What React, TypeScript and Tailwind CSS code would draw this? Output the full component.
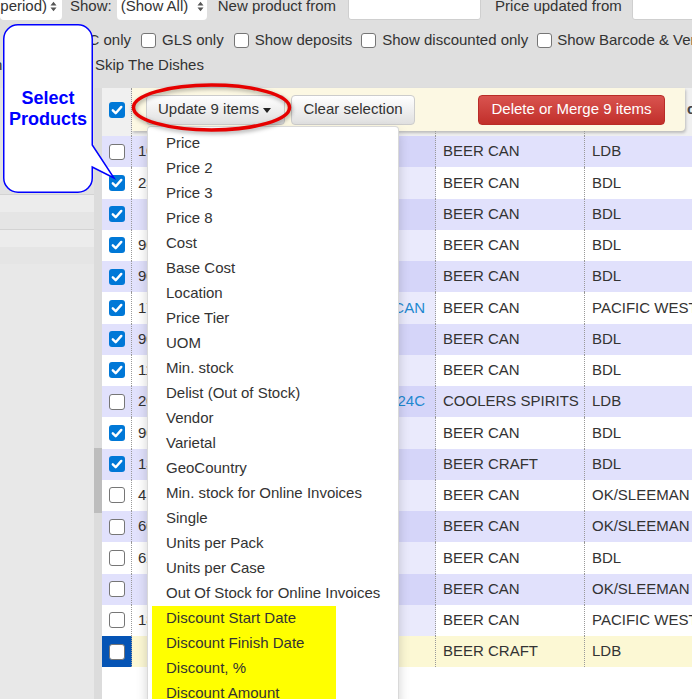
import React from 'react'

// ============================================================================
// Products grid with bulk-update dropdown (annotated screenshot)
// ============================================================================

type Row = {
  code: string
  name: string
  cat: string
  vendor: string
  checked?: boolean
  active?: boolean
  link?: boolean
}

const rows: Row[] = [
  { code: '10245', name: 'KOKANEE 6', cat: 'BEER CAN', vendor: 'LDB' },
  { code: '23011', name: 'BUD 8', cat: 'BEER CAN', vendor: 'BDL', checked: true },
  { code: '', name: 'CANADIAN 6', cat: 'BEER CAN', vendor: 'BDL', checked: true },
  { code: '90412', name: 'COORS 12', cat: 'BEER CAN', vendor: 'BDL', checked: true },
  { code: '90418', name: 'COORS 24', cat: 'BEER CAN', vendor: 'BDL', checked: true },
  { code: '17720', name: 'PACIFIC PILSNER 473ML 6 CAN', cat: 'BEER CAN', vendor: 'PACIFIC WEST', checked: true, link: true },
  { code: '90433', name: 'MOLSON 15', cat: 'BEER CAN', vendor: 'BDL', checked: true },
  { code: '11208', name: 'BLUE 12', cat: 'BEER CAN', vendor: 'BDL', checked: true },
  { code: '20981', name: 'SMIRNOFF ICE ORIGINAL 24C', cat: 'COOLERS SPIRITS', vendor: 'LDB', link: true },
  { code: '90457', name: 'STELLA 6', cat: 'BEER CAN', vendor: 'BDL', checked: true },
  { code: '13390', name: 'GOOSE IPA 6', cat: 'BEER CRAFT', vendor: 'BDL', checked: true },
  { code: '41022', name: 'SLEEMAN 8', cat: 'BEER CAN', vendor: 'OK/SLEEMAN' },
  { code: '60114', name: 'OKANAGAN 6', cat: 'BEER CAN', vendor: 'OK/SLEEMAN' },
  { code: '62008', name: 'BUSCH 12', cat: 'BEER CAN', vendor: 'BDL' },
  { code: '', name: 'CLEAR 6', cat: 'BEER CAN', vendor: 'OK/SLEEMAN' },
  { code: '18841', name: 'LUCKY 8', cat: 'BEER CAN', vendor: 'PACIFIC WEST' },
  { code: '', name: 'HAZY 4', cat: 'BEER CRAFT', vendor: 'LDB', active: true },
]

const menuItems = [
  'Price',
  'Price 2',
  'Price 3',
  'Price 8',
  'Cost',
  'Base Cost',
  'Location',
  'Price Tier',
  'UOM',
  'Min. stock',
  'Delist (Out of Stock)',
  'Vendor',
  'Varietal',
  'GeoCountry',
  'Min. stock for Online Invoices',
  'Single',
  'Units per Pack',
  'Units per Case',
  'Out Of Stock for Online Invoices',
]

const discountItems = [
  'Discount Start Date',
  'Discount Finish Date',
  'Discount, %',
  'Discount Amount',
]

function Check({ on, small }: { on?: boolean; small?: boolean }) {
  const dim = small ? 'h-[15px] w-[15px]' : 'h-[16px] w-[16px]'
  if (on)
    return (
      <span className={`flex ${dim} shrink-0 items-center justify-center rounded-[3px] bg-[#0078d7]`}>
        <svg viewBox="0 0 16 16" className="h-full w-full">
          <path
            d="M3.8 8.3 6.7 11.2 12.3 4.9"
            fill="none"
            stroke="white"
            strokeWidth="2.4"
            strokeLinecap="round"
            strokeLinejoin="round"
          />
        </svg>
      </span>
    )
  return <span className={`block ${dim} shrink-0 rounded-[3px] border-[1.5px] border-[#767676] bg-white`} />
}

function Arrows() {
  return (
    <svg viewBox="0 0 7 11" className="h-[11px] w-[7px] shrink-0 text-[#555]">
      <path d="M0.5 4.5 3.5 0.8 6.5 4.5Z M0.5 6.5 3.5 10.2 6.5 6.5Z" fill="currentColor" />
    </svg>
  )
}

function Callout() {
  return (
    <div className="absolute left-[3px] top-[24px] h-[169px] w-[90px]">
      <svg className="absolute inset-0 overflow-visible" width="90" height="169">
        <path
          d="M15 0.75 H75 A14.25 14.25 0 0 1 89.25 15 V121 L111 154 L89.25 143 V154 A14.25 14.25 0 0 1 75 168.25 H15 A14.25 14.25 0 0 1 0.75 154 V15 A14.25 14.25 0 0 1 15 0.75 Z"
          fill="white"
          stroke="#0000ff"
          strokeWidth="1.5"
        />
      </svg>
      <div className="relative flex h-full flex-col items-center justify-center text-center text-[18px] font-bold leading-[21px] text-[#0000ff]">
        <span>Select</span>
        <span>Products</span>
      </div>
    </div>
  )
}

export default function App() {
  return (
    <div className="relative h-[699px] w-[692px] overflow-hidden bg-[#dfdfdf] font-['Liberation_Sans',Arial,sans-serif] text-[15px] text-[#333]">
      {/* filters */}
      <div className="h-[88px]">
        <div className="flex h-[21px] items-start overflow-hidden whitespace-nowrap">
          <div className="-mt-[8px] flex h-[28px] w-[62px] shrink-0 items-center justify-end gap-[3px] rounded-[4px] bg-white pr-[5px]">
            <span>(Any period)</span>
            <Arrows />
          </div>
          <span className="-mt-[8px] ml-[8px] flex h-[28px] items-center">Show:</span>
          <div className="-mt-[8px] ml-[5px] flex h-[28px] w-[90px] shrink-0 items-center justify-between rounded-[4px] bg-white pl-[4px] pr-[3px]">
            <span>(Show All)</span>
            <Arrows />
          </div>
          <span className="-mt-[8px] ml-[11px] flex h-[28px] items-center">New product from</span>
          <div className="-mt-[8px] ml-[12px] h-[28px] w-[133px] shrink-0 rounded-[3px] border border-[#cfcfcf] bg-white" />
          <span className="-mt-[8px] ml-[14px] flex h-[28px] items-center">Price updated from</span>
          <div className="-mt-[8px] ml-[10px] h-[28px] w-[90px] shrink-0 rounded-[3px] border border-[#cfcfcf] bg-white" />
        </div>
        <div className="mt-[7px] flex h-[24px] items-center whitespace-nowrap">
          <span className="flex w-[131px] shrink-0 justify-end">BC only</span>
          <span className="ml-[10px]"><Check small /></span>
          <span className="ml-[6px]">GLS only</span>
          <span className="ml-[10px]"><Check small /></span>
          <span className="ml-[6px]">Show deposits</span>
          <span className="ml-[9px]"><Check small /></span>
          <span className="ml-[6px]">Show discounted only</span>
          <span className="ml-[9px]"><Check small /></span>
          <span className="ml-[5px]">Show Barcode &amp; Vendor</span>
        </div>
        <div className="mt-[1px] flex h-[24px] items-center whitespace-nowrap">
          <span className="-ml-[6px] w-[80px] shrink-0">h</span>
          <Check small />
          <span className="ml-[6px]">Skip The Dishes</span>
        </div>
      </div>

      {/* main */}
      <div className="flex h-[611px]">
        <div className="flex w-[94px] shrink-0 flex-col bg-[#e8e8e8]">
          <div className="h-[106px] bg-[#e2e2e2]" />
          <div className="h-px bg-[#d3d3d3]" />
          <div className="h-[17px] bg-[#ececec]" />
          <div className="h-[17px] bg-[#e5e5e5]" />
          <div className="h-px bg-[#d3d3d3]" />
          <div className="h-[17px] bg-[#ececec]" />
          <div className="h-[17px] bg-[#e5e5e5]" />
        </div>
        <div className="flex w-[8px] shrink-0 flex-col bg-[#dcdcdc]">
          <div className="mt-[360px] h-[65px] bg-[#bdbdbd]" />
        </div>

        <div className="flex min-w-0 flex-1 flex-col bg-white">
          {/* header with bulk toolbar */}
          <div className="flex h-[48px] shrink-0 bg-[#f0f0f0]">
            <div className="flex w-[30px] shrink-0 justify-center border-r border-dotted border-[#999] pt-[14px]">
              <Check on />
            </div>
            <div className="flex min-w-0 flex-1 flex-col">
              <div className="flex h-[43px] shrink-0 items-center">
                <div className="flex h-full w-[553px] shrink-0 items-center rounded-br-[4px] bg-[#fcf8e3] pl-[14px] shadow-[1px_2px_3px_rgba(0,0,0,0.22)]">
                  <button className="flex h-[30px] w-[139px] items-center rounded-[4px] border border-[#ccc] bg-linear-to-b from-white to-[#e0e0e0] pl-[11px] text-[#333]">
                    Update 9 items
                    <span className="ml-[4px] mt-[2px] h-0 w-0 border-x-[4px] border-t-[5px] border-x-transparent border-t-[#222]" />
                  </button>
                  <button className="ml-[6px] flex h-[30px] w-[124px] items-center justify-center rounded-[4px] border border-[#ccc] bg-linear-to-b from-white to-[#e0e0e0] text-[#333]">
                    Clear selection
                  </button>
                  <button className="ml-auto mr-[20px] flex h-[30px] w-[187px] items-center justify-center rounded-[4px] border border-[#b92c28] bg-linear-to-b from-[#d9534f] to-[#c12e2a] text-white">
                    Delete or Merge 9 items
                  </button>
                </div>
                <span className="ml-[2px] whitespace-nowrap font-bold text-[#444]">co</span>
              </div>
              <div className="flex flex-1">
                <div className="w-[304px] shrink-0 border-r border-dotted border-[#999]" />
                <div className="w-[149px] shrink-0 border-r border-dotted border-[#999]" />
              </div>
            </div>
          </div>

          {/* rows */}
          {rows.map((r, i) => {
            const odd = i % 2 === 0
            const base = r.active ? 'bg-[#fcf8d4]' : odd ? 'bg-[#e1e1fc]' : 'bg-white'
            const sorted = r.active ? 'bg-[#fcf8d4]' : odd ? 'bg-[#d5d5f9]' : 'bg-[#eaeafc]'
            return (
              <div key={i} className={`flex h-[31.25px] shrink-0 items-center whitespace-nowrap ${base}`}>
                <div
                  className={`flex h-full w-[30px] shrink-0 items-center justify-center border-r border-dotted border-[#999] ${r.active ? 'bg-[#0554b5]' : ''}`}
                >
                  <Check on={r.checked} />
                </div>
                <div className="w-[118px] shrink-0 overflow-hidden pl-[6px]">{r.code}</div>
                <div
                  className={`flex h-full w-[186px] shrink-0 items-center overflow-hidden border-r border-dotted border-[#999] pr-[10px] ${sorted} ${r.link ? 'justify-end text-[#1e88d0]' : 'pl-[6px]'}`}
                >
                  {r.name}
                </div>
                <div className="flex h-full w-[149px] shrink-0 items-center border-r border-dotted border-[#999] pl-[7px]">
                  {r.cat}
                </div>
                <div className="pl-[7px]">{r.vendor}</div>
              </div>
            )
          })}
        </div>
      </div>

      {/* dropdown menu */}
      <div className="absolute left-[147px] top-[126px] h-[600px] w-[252px] rounded-[4px] border border-[rgba(0,0,0,0.15)] bg-white pt-[4px] whitespace-nowrap text-[#333] shadow-[0_6px_12px_rgba(0,0,0,0.175)]">
        {menuItems.map((m) => (
          <div key={m} className="flex h-[25px] items-center pl-[18px]">
            {m}
          </div>
        ))}
        <div className="ml-[4px] w-[184px] bg-[#ffff00]">
          {discountItems.map((m) => (
            <div key={m} className="flex h-[25px] items-center pl-[14px]">
              {m}
            </div>
          ))}
        </div>
      </div>

      {/* annotation: ellipse around update button */}
      <svg
        className="absolute left-[128px] top-[80px] h-[56px] w-[168px] drop-shadow-[1px_2px_2px_rgba(0,0,0,0.35)]"
        viewBox="0 0 168 56"
      >
        <ellipse cx="83.5" cy="27.5" rx="78" ry="22.5" fill="none" stroke="#e60000" strokeWidth="3.5" />
      </svg>

      <Callout />
    </div>
  )
}
